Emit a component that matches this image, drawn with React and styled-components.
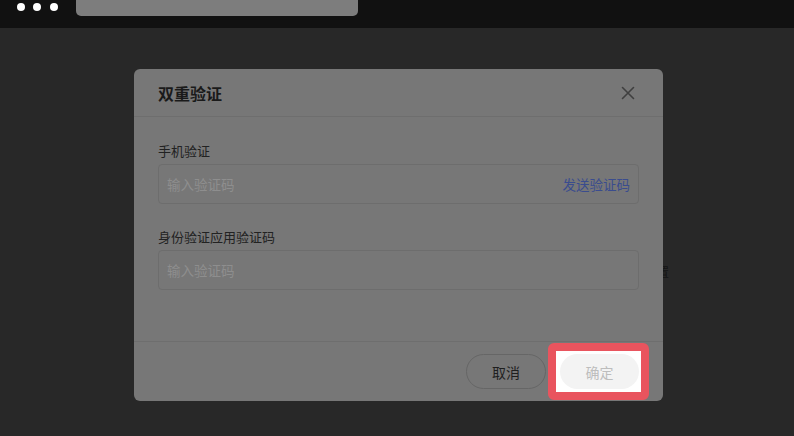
import React from "react";
import styled, { createGlobalStyle } from "styled-components";

const Global = createGlobalStyle`
  html, body { margin: 0; padding: 0; background: #282828; }
  body { font-family: "Noto Sans CJK SC", "Noto Sans", sans-serif; width: 794px; height: 436px; overflow: hidden; }
  * { box-sizing: border-box; }
`;

const Shell = styled.div`
  width: 794px;
  height: 436px;
  display: flex;
  flex-direction: column;
`;

const TopBar = styled.div`
  height: 28px;
  background: #111111;
  display: flex;
  align-items: flex-start;
  padding-left: 16.5px;
  flex-shrink: 0;
`;

const Dots = styled.div`
  display: flex;
  gap: 8.5px;
  margin-top: 3px;
`;

const Dot = styled.span`
  width: 8px;
  height: 8px;
  border-radius: 50%;
  background: #ffffff;
`;

const UrlBar = styled.div`
  width: 282px;
  height: 16px;
  margin-left: 18.5px;
  background: #7d7d7d;
  border-radius: 0 0 5px 5px;
`;

const Main = styled.div`
  position: relative;
  flex: 1;
  background: #282828;
`;

const BackgroundText = styled.div`
  padding: 237px 0 0 657px;
  font-size: 12px;
  line-height: 14px;
  color: #141414;
`;

const ModalLayer = styled.div`
  position: absolute;
  inset: 0;
  display: flex;
  justify-content: center;
  align-items: flex-start;
  padding: 41px 0 0 3px;
`;

const Modal = styled.div`
  width: 529px;
  height: 332px;
  background: #777777;
  border-radius: 6px;
  display: flex;
  flex-direction: column;
`;

const Header = styled.div`
  height: 48px;
  padding: 0 28px 0 24px;
  display: flex;
  align-items: center;
  justify-content: space-between;
  border-bottom: 1px solid #6e6e6e;
`;

const Title = styled.div`
  font-size: 16px;
  font-weight: 700;
  color: #1a1a1a;
  line-height: 24px;
`;

const Close = styled.button`
  border: none;
  background: none;
  padding: 0;
  width: 14px;
  height: 14px;
  display: flex;
  cursor: pointer;
`;

const Body = styled.div`
  flex: 1;
  padding: 23px 24px 0 24px;
  border-bottom: 1px solid #6e6e6e;
`;

const Field = styled.div`
  margin-bottom: 22px;
`;

const Label = styled.div`
  font-size: 13px;
  line-height: 22px;
  color: #222222;
  margin-bottom: 2px;
`;

const InputBox = styled.div`
  height: 40px;
  border: 1px solid #6d6d6d;
  border-radius: 4px;
  display: flex;
  align-items: center;
  justify-content: space-between;
  padding: 0 8px;
`;

const Placeholder = styled.span`
  font-size: 13.5px;
  color: #8e8e8e;
`;

const Link = styled.span`
  font-size: 13.5px;
  color: #3a4c8e;
`;

const Footer = styled.div`
  height: 59px;
  display: flex;
  align-items: center;
  justify-content: flex-end;
  padding-right: 14px;
  gap: 2px;
`;

const PillButton = styled.button`
  width: ${(p) => p.$w}px;
  height: 35px;
  border-radius: 18px;
  font-family: inherit;
  font-size: 14px;
  padding: 0;
  border: ${(p) => (p.$primary ? "none" : "1px solid #666666")};
  background: ${(p) => (p.$primary ? "#f3f3f3" : "transparent")};
  color: ${(p) => (p.$primary ? "#bdbdbd" : "#1f1f1f")};
`;

const Spotlight = styled.div`
  border: 8px solid #e9545e;
  border-radius: 6px;
  background: #ffffff;
  padding: 3px 2px 3px 4px;
  display: flex;
`;

export default function App() {
  return (
    <>
      <Global />
      <Shell>
        <TopBar>
          <Dots>
            <Dot />
            <Dot />
            <Dot />
          </Dots>
          <UrlBar />
        </TopBar>
        <Main>
          <BackgroundText>置</BackgroundText>
          <ModalLayer>
            <Modal>
              <Header>
                <Title>双重验证</Title>
                <Close aria-label="关闭">
                  <svg width="14" height="14" viewBox="0 0 14 14">
                    <path d="M1.5 1.5 L12.5 12.5 M12.5 1.5 L1.5 12.5" stroke="#3f3f3f" strokeWidth="1.6" strokeLinecap="round" />
                  </svg>
                </Close>
              </Header>
              <Body>
                <Field>
                  <Label>手机验证</Label>
                  <InputBox>
                    <Placeholder>输入验证码</Placeholder>
                    <Link>发送验证码</Link>
                  </InputBox>
                </Field>
                <Field>
                  <Label>身份验证应用验证码</Label>
                  <InputBox>
                    <Placeholder>输入验证码</Placeholder>
                  </InputBox>
                </Field>
              </Body>
              <Footer>
                <PillButton $w={80}>取消</PillButton>
                <Spotlight>
                  <PillButton $w={79} $primary>确定</PillButton>
                </Spotlight>
              </Footer>
            </Modal>
          </ModalLayer>
        </Main>
      </Shell>
    </>
  );
}
